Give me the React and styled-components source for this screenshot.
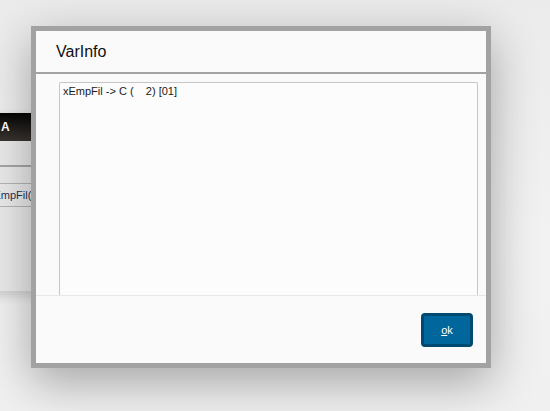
import React from "react";
import styled, { createGlobalStyle } from "styled-components";

const GlobalStyle = createGlobalStyle`
  html, body {
    margin: 0;
    padding: 0;
    background: #f2f2f2;
    font-family: "Liberation Sans", Arial, sans-serif;
  }
`;

const Desktop = styled.div`
  position: relative;
  width: 550px;
  height: 411px;
  overflow: hidden;
  background: linear-gradient(180deg, #ebebeb 0%, #f2f2f2 60%, #f0f0f0 100%);
`;

const BackWindow = styled.div`
  position: absolute;
  left: -60px;
  top: 113px;
  width: 400px;
  height: 178px;
  display: flex;
  flex-direction: column;
  background: #eaeaea;
  border-bottom: 1px solid #d6d6d6;
  box-shadow: 0 4px 10px rgba(0, 0, 0, 0.15);
`;

const BackTitle = styled.div`
  height: 28px;
  display: flex;
  align-items: center;
  padding-left: 61px;
  background: linear-gradient(180deg, #050505 0%, #2a2724 70%, #3a3530 100%);
  color: #fff;
  font-weight: bold;
  font-size: 12px;
`;

const BackRule = styled.div`
  margin-top: 24px;
  height: 2px;
  background: #a6a6a6;
`;

const BackField = styled.div`
  margin-top: 16px;
  height: 22px;
  border-top: 1px solid #b4b4b4;
  border-bottom: 1px solid #b4b4b4;
  display: flex;
  align-items: center;
  padding-left: 48px;
  font-size: 11px;
  color: #1f3550;
`;

const Dialog = styled.div`
  position: absolute;
  left: 31px;
  top: 26px;
  width: 460px;
  height: 342px;
  box-sizing: border-box;
  border: 5px solid #a2a2a2;
  background: #fafafa;
  display: flex;
  flex-direction: column;
  box-shadow: 0 14px 44px rgba(0, 0, 0, 0.32);
`;

const Header = styled.div`
  height: 41px;
  flex: none;
  display: flex;
  align-items: center;
  padding-left: 20px;
  font-size: 16px;
  color: #111;
  border-bottom: 2px solid #a2a2a2;
`;

const Body = styled.div`
  flex: 1;
  min-height: 0;
  overflow: hidden;
  padding: 8px 8px 0 23px;
  display: flex;
`;

const InfoBox = styled.div`
  flex: 1;
  box-sizing: border-box;
  border: 1px solid #c6c6c6;
  border-bottom: none;
  border-radius: 2px 2px 0 0;
  background: #fcfcfc;
  padding: 2px 3px;
  font-size: 11px;
  line-height: 13px;
  color: #1a1a1a;
  white-space: pre;
`;

const Footer = styled.div`
  height: 67px;
  flex: none;
  border-top: 1px solid #e8e8e8;
  display: flex;
  align-items: center;
  justify-content: flex-end;
  padding-right: 13px;
`;

const Button = styled.button`
  width: 52px;
  height: 34px;
  box-sizing: border-box;
  border: 3px solid #004a72;
  border-radius: 4px;
  background: #00669b;
  color: #fff;
  font-family: "Liberation Sans", Arial, sans-serif;
  font-size: 11px;
  padding: 0;
  cursor: pointer;
`;

const App = () => {
  return (
    <>
      <GlobalStyle />
      <Desktop>
        <BackWindow>
          <BackTitle>A</BackTitle>
          <BackRule />
          <BackField>xEmpFil()</BackField>
        </BackWindow>
        <Dialog>
          <Header>VarInfo</Header>
          <Body>
            <InfoBox>{"xEmpFil -> C (    2) [01]"}</InfoBox>
          </Body>
          <Footer>
            <Button>
              <u>o</u>k
            </Button>
          </Footer>
        </Dialog>
      </Desktop>
    </>
  );
};

export default App;
